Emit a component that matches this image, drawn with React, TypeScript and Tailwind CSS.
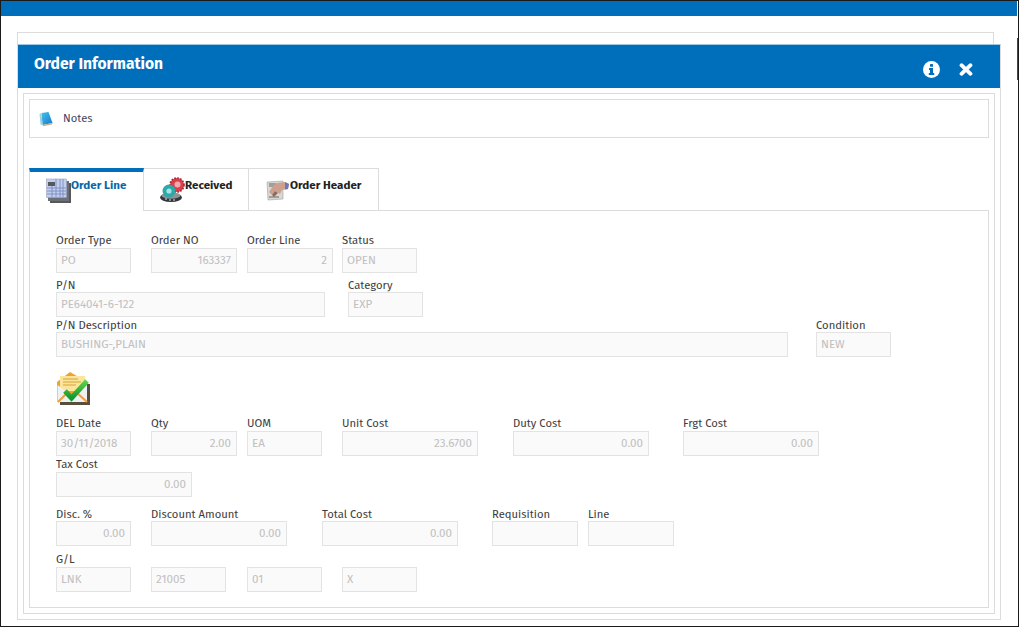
const font = 'font-["Fira_Sans","Noto_Sans","Open_Sans",sans-serif]';

function InfoIcon() {
  return (
    <svg width="17" height="17" viewBox="0 0 17 17" className="shrink-0">
      <circle cx="8.5" cy="8.5" r="8.5" fill="#fff" />
      <rect x="7" y="3" width="3" height="2.8" rx="0.6" fill="#006fbb" />
      <path d="M6 7h4v5h1.2v2H5.8v-2H7V9H6z" fill="#006fbb" />
    </svg>
  );
}

function CloseIcon() {
  return (
    <svg width="14" height="13" viewBox="0 0 14 13" className="shrink-0">
      <path d="M2.5 2.2 L11.5 10.8 M11.5 2.2 L2.5 10.8" stroke="#fff" strokeWidth="3.8" strokeLinecap="round" />
    </svg>
  );
}

function NotesIcon() {
  return (
    <svg width="16" height="16" viewBox="0 0 16 16" className="shrink-0">
      <defs>
        <linearGradient id="noteBlue" x1="0" y1="0" x2="1" y2="1">
          <stop offset="0" stopColor="#45c3e8" />
          <stop offset="1" stopColor="#1576d2" />
        </linearGradient>
      </defs>
      <path d="M3.5 2 L10.5 1 L14.5 12 L4.5 14 Z" fill="url(#noteBlue)" />
      <path d="M1.5 3 L3.5 2 L4.5 14 L2.5 13.5 Z" fill="#9fd0dc" />
      <path d="M4.5 14 L14.5 12 L14 13.5 L5 15.2 Z" fill="#c9b28c" />
    </svg>
  );
}

function GridIcon() {
  return (
    <svg width="25" height="25" viewBox="0 0 25 25" className="shrink-0">
      <rect x="4" y="5" width="21" height="20" fill="#2e2e2e" opacity="0.8" />
      <rect x="2" y="3" width="21" height="20" fill="#6b6f78" />
      <rect x="0.5" y="1" width="20" height="18.5" fill="#c3cfee" stroke="#98a3c2" strokeWidth="0.6" />
      <rect x="2" y="4" width="7" height="4" fill="#55585f" />
      <path d="M1 10H20M1 13H20M1 16H20M6 8V19M10 1V19M14 1V19M17 1V19" stroke="#7c8cc0" strokeWidth="0.9" />
    </svg>
  );
}

function ReceivedIcon() {
  return (
    <svg width="25" height="25" viewBox="0 0 25 25" className="shrink-0">
      <ellipse cx="11" cy="20.5" rx="11" ry="4.5" fill="#33363a" />
      <ellipse cx="11" cy="18.5" rx="9.5" ry="3.2" fill="#8d9496" />
      <path d="M5 22h2M9 23h2M13 23h2" stroke="#e2e2e2" strokeWidth="1" />
      <circle cx="17" cy="8" r="7" fill="#d9404f" />
      <circle cx="17" cy="8" r="7" fill="none" stroke="#a5242f" strokeWidth="1.6" strokeDasharray="1.6 1.4" />
      <circle cx="17.5" cy="7.5" r="3" fill="#f2a9ae" />
      <circle cx="9" cy="14" r="6.5" fill="#2ba9ab" />
      <circle cx="9" cy="14" r="2.6" fill="#a9e3de" />
    </svg>
  );
}

function HeaderIcon() {
  return (
    <svg width="24" height="24" viewBox="0 0 24 24" className="shrink-0">
      <path d="M1 4 L17 3 L17 21 L2 22 Z" fill="#dad8d4" stroke="#a0a0a0" strokeWidth="0.6" />
      <path d="M3 6H10M3 8H8M3 19H13" stroke="#666" strokeWidth="1" />
      <path d="M3 14 L7 8 L11 5 L19 4 L23 6 L22 11 L16 12 L14 16 L9 13 L6 17 Z" fill="#cf9f8e" />
      <path d="M19 4 L23 6 L22 11 L19 11.5 Z" fill="#6d78b8" />
      <path d="M6 17 L9 13 L12 15 L8 19 Z" fill="#8c6a5e" />
    </svg>
  );
}

function MailCheckIcon() {
  return (
    <svg width="36" height="36" viewBox="0 0 36 36" className="shrink-0">
      <defs>
        <linearGradient id="checkGreen" x1="0" y1="0" x2="0" y2="1">
          <stop offset="0" stopColor="#5fd04a" />
          <stop offset="1" stopColor="#0f9a2e" />
        </linearGradient>
      </defs>
      <rect x="4" y="13" width="30" height="21" fill="#3a2f1c" opacity="0.85" />
      <path d="M1 11 L14 1 L31 11 V31 H1 Z" fill="#f2a12c" />
      <path d="M4 5 H29 V20 H4 Z" fill="#fbe59a" />
      <path d="M7 8H22M7 11H25M7 14H20" stroke="#d8a136" strokeWidth="1" />
      <path d="M1.5 14 L15 24 L31 14 V31 H1.5 Z" fill="#eef1f3" />
      <path d="M2 31 L12 21 M31 31 L20 21" stroke="#f39c3a" strokeWidth="2" />
      <path d="M9 20 L15.5 27 L31 10" fill="none" stroke="url(#checkGreen)" strokeWidth="5" />
    </svg>
  );
}

function Field({ label, value, width, inputWidth, right, low }: { label: string; value?: string; width: string; inputWidth?: string; right?: boolean; low?: boolean }) {
  return (
    <div className={`flex flex-col shrink-0 ${width}`}>
      <label className={`h-[16px] text-[11.25px] text-[#3c3c3c] whitespace-nowrap ${low ? 'leading-[18px]' : 'leading-[16px]'}`}>{label}</label>
      <div className={`h-[25px] ${inputWidth ?? 'w-full'} border border-[#e3e3e3] bg-[#fafafa] text-[11.6px] leading-[23px] text-[#c0c0c0] ${right ? 'text-right pr-[5px]' : 'pl-[4px]'}`}>
        {value}
      </div>
    </div>
  );
}

export default function App() {
  return (
    <div className={`relative w-[1019px] h-[627px] bg-white border-l border-t border-b border-r border-[#1a1a1a] overflow-hidden ${font}`}>
      <div className="h-[15px] w-[1016px] bg-[#006fbb]" />
      <div className="absolute right-0 top-[37px] w-[1px] h-[42px] bg-[#005a96]" />

      <div className="pl-[16px] pt-[16px]">
        <div className="w-[977px] h-[12px] border border-b-0 border-[#dcdcdc]" />
        <div className="w-[984px] h-[576px] border border-[#dcdcdc] border-t-[#9ec9e6] flex flex-col">
          <div className="h-[43px] bg-[#006fbb] flex justify-between pl-[16px] pr-[27px] shrink-0">
            <span className="text-[15.6px] leading-[37px] font-bold text-white">Order Information</span>
            <div className="flex items-center gap-[19px] pt-[5px]">
              <InfoIcon />
              <CloseIcon />
            </div>
          </div>

          <div className="mx-[5px] my-[5px] flex-1 border border-[#dcdcdc] px-[5px] py-[5px] flex flex-col">
            <div className="h-[39px] shrink-0 border border-[#dcdcdc] flex items-center pl-[8px] gap-[9px]">
              <NotesIcon />
              <span className="text-[11.25px] text-[#444466]">Notes</span>
            </div>

            <div className="flex mt-[30px] h-[43px] shrink-0 -mb-px">
              <div className="w-[115px] h-full border-t-[4px] border-t-[#006fbb] border-l border-r border-[#dcdcdc] bg-white flex pl-[16px] pt-[6px] relative z-10">
                <GridIcon />
                <span className="text-[11.6px] font-bold text-[#0b68a8] leading-[15px]">Order Line</span>
              </div>
              <div className="w-[105px] h-full border-t border-r border-b border-[#dcdcdc] flex pl-[16px] pt-[9px]">
                <div className="-mt-[1px] h-[25px]"><ReceivedIcon /></div>
                <span className="text-[11.6px] font-bold text-[#222] leading-[15px]">Received</span>
              </div>
              <div className="w-[130px] h-full border-t border-r border-b border-[#dcdcdc] flex pl-[17px] pt-[9px]">
                <HeaderIcon />
                <span className="text-[11.6px] font-bold text-[#222] leading-[15px]">Order Header</span>
              </div>
            </div>

            <div className="flex-1 border border-[#dcdcdc] pl-[26px] pt-[21px]">
              <div className="flex">
                <Field label="Order Type" value="PO" width="w-[95px]" inputWidth="w-[75px]" />
                <Field label="Order NO" value="163337" width="w-[96px]" inputWidth="w-[86px]" right />
                <Field label="Order Line" value="2" width="w-[95px]" inputWidth="w-[86px]" right />
                <Field label="Status" value="OPEN" width="w-[75px]" />
              </div>
              <div className="flex mt-[3px]">
                <Field low label="P/N" value="PE64041-6-122" width="w-[292px]" inputWidth="w-[269px]" />
                <Field low label="Category" value="EXP" width="w-[75px]" />
              </div>
              <div className="flex mt-[-1px]">
                <Field low label="P/N Description" value="BUSHING-,PLAIN" width="w-[760px]" inputWidth="w-[732px]" />
                <Field low label="Condition" value="NEW" width="w-[75px]" />
              </div>
              <div className="mt-[14px] h-[36px]">
                <MailCheckIcon />
              </div>
              <div className="flex mt-[8px]">
                <Field label="DEL Date" value="30/11/2018" width="w-[95px]" inputWidth="w-[75px]" />
                <Field label="Qty" value="2.00" width="w-[96px]" inputWidth="w-[86px]" right />
                <Field label="UOM" value="EA" width="w-[95px]" inputWidth="w-[75px]" />
                <Field label="Unit Cost" value="23.6700" width="w-[171px]" inputWidth="w-[136px]" right />
                <Field label="Duty Cost" value="0.00" width="w-[170px]" inputWidth="w-[136px]" right />
                <Field label="Frgt Cost" value="0.00" width="w-[136px]" right />
              </div>
              <div className="flex">
                <Field label="Tax Cost" value="0.00" width="w-[136px]" right />
              </div>
              <div className="flex mt-[8px]">
                <Field low label="Disc. %" value="0.00" width="w-[95px]" inputWidth="w-[75px]" right />
                <Field low label="Discount Amount" value="0.00" width="w-[171px]" inputWidth="w-[136px]" right />
                <Field low label="Total Cost" value="0.00" width="w-[170px]" inputWidth="w-[136px]" right />
                <Field low label="Requisition" width="w-[96px]" inputWidth="w-[86px]" right />
                <Field low label="Line" width="w-[86px]" right />
              </div>
              <div className="flex mt-[5px]">
                <Field label="G/L" value="LNK" width="w-[95px]" inputWidth="w-[75px]" />
                <Field label="" value="21005" width="w-[96px]" inputWidth="w-[75px]" />
                <Field label="" value="01" width="w-[95px]" inputWidth="w-[75px]" />
                <Field label="" value="X" width="w-[75px]" />
              </div>
            </div>
          </div>
        </div>
      </div>
    </div>
  );
}
